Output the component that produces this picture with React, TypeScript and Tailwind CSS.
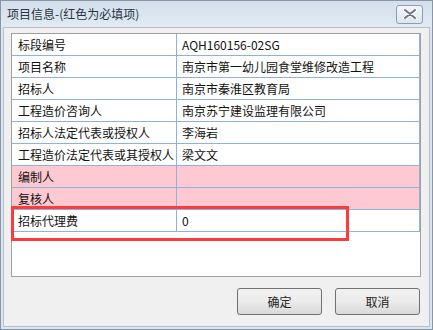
const rows = [
  { label: "标段编号", value: "AQH160156-02SG", required: false },
  { label: "项目名称", value: "南京市第一幼儿园食堂维修改造工程", required: false },
  { label: "招标人", value: "南京市秦淮区教育局", required: false },
  { label: "工程造价咨询人", value: "南京苏宁建设监理有限公司", required: false },
  { label: "招标人法定代表或授权人", value: "李海岩", required: false },
  { label: "工程造价法定代表或其授权人", value: "梁文文", required: false },
  { label: "编制人", value: "", required: true },
  { label: "复核人", value: "", required: true },
  { label: "招标代理费", value: "0", required: false },
];

function CloseButton() {
  return (
    <div className="w-[27px] h-[19px] rounded-[3px] border border-[#8e9cb0] bg-gradient-to-b from-[#f4f7fb] to-[#dde5ee] flex items-center justify-center">
      <svg width="14" height="10" viewBox="0 0 14 10">
        <path d="M2 1 L12 9 M12 1 L2 9" stroke="#ffffff" strokeWidth="4" strokeLinecap="round" />
        <path d="M2 1 L12 9 M12 1 L2 9" stroke="#6b7380" strokeWidth="2" strokeLinecap="round" />
      </svg>
    </div>
  );
}

function DialogButton({ text }: { text: string }) {
  return (
    <button className="w-[85px] h-[27px] rounded-[3px] border border-[#707070] bg-gradient-to-b from-[#f2f2f2] via-[#ebebeb] to-[#d9d9d9] text-[12px] text-[#222]">
      {text}
    </button>
  );
}

export default function App() {
  return (
    <div
      className="w-[433px] h-[330px] border border-[#8a96a4] bg-[#dbe5f0] flex flex-col"
      style={{ fontFamily: '"Noto Sans CJK SC", "Noto Sans", sans-serif' }}
    >
      <div className="h-[26px] flex items-center justify-between pl-[6px] pr-[9px] bg-gradient-to-b from-[#d3dfec] to-[#e2eaf3]">
        <span className="text-[12px] text-[#2a3440]">项目信息-(红色为必填项)</span>
        <CloseButton />
      </div>
      <div className="flex-1 mx-[2px] mb-[2px] bg-[#f0f0f0] border border-[#b6c1cd] pl-[7px] pr-[8px] pt-[5px] flex flex-col">
        <div className="h-[244px] border border-[#a0a0a0] bg-white relative">
          {rows.map((r) => (
            <div
              key={r.label}
              className={`flex h-[22px] border-b border-[#8db2de] text-[12px] text-[#111] ${r.required ? "bg-[#ffc9d1]" : ""}`}
            >
              <div className="w-[165px] border-r border-[#8db2de] pl-[6px] flex items-center whitespace-nowrap">
                {r.label}
              </div>
              <div className="flex-1 border-r border-[#8db2de] pl-[5px] flex items-center whitespace-nowrap">
                {r.value}
              </div>
            </div>
          ))}
          <div className="absolute left-[-1px] top-[172px] w-[338px] h-[35px] border-[3px] border-[#ff3a3a]" />
        </div>
        <div className="flex justify-end gap-[13px] mt-[11px] pr-[1px]">
          <DialogButton text="确定" />
          <DialogButton text="取消" />
        </div>
      </div>
    </div>
  );
}
